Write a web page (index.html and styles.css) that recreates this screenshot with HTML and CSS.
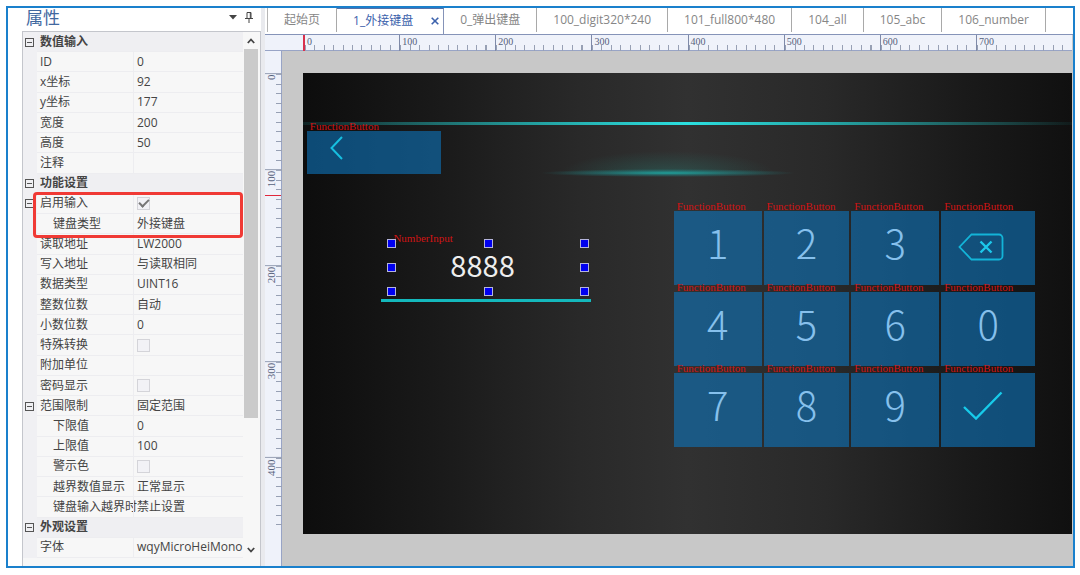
FILE: index.html
```html
<!DOCTYPE html>
<html lang="zh-CN">
<head>
<meta charset="utf-8">
<title>属性</title>
<link rel="stylesheet" href="styles.css">
</head>
<body>
<div class="app">
  <aside class="panel">
    <header class="panel-head">
      <h1 class="panel-title">属性</h1>
      <button class="head-btn" type="button" aria-label="菜单"><svg width="8" height="5" viewBox="0 0 8 5"><path d="M0 0h8L4 4.5z" fill="#444"/></svg></button>
      <button class="head-btn" type="button" aria-label="固定"><svg width="8" height="11" viewBox="0 0 8 11" fill="none" stroke="#444"><path d="M2 6.5v-6h4v6M5.3 .5v6M0 6.5h8M4 6.5V11"/></svg></button>
    </header>
    <div class="panel-body">
      <div class="grid-wrap">
        <table class="props">
          <tbody>
            <tr class="group"><td><button class="fold" type="button" aria-label="折叠"></button></td><th colspan="2">数值输入</th></tr>
            <tr><td></td><th>ID</th><td>0</td></tr>
            <tr><td></td><th>x坐标</th><td>92</td></tr>
            <tr><td></td><th>y坐标</th><td>177</td></tr>
            <tr><td></td><th>宽度</th><td>200</td></tr>
            <tr><td></td><th>高度</th><td>50</td></tr>
            <tr><td></td><th>注释</th><td></td></tr>
            <tr class="group"><td><button class="fold" type="button" aria-label="折叠"></button></td><th colspan="2">功能设置</th></tr>
            <tr><td><button class="fold" type="button" aria-label="折叠"></button></td><th><label for="c1">启用输入</label></th><td><input id="c1" class="tick" type="checkbox" checked></td></tr>
            <tr class="sub"><td></td><th>键盘类型</th><td>外接键盘</td></tr>
            <tr><td></td><th>读取地址</th><td>LW2000</td></tr>
            <tr><td></td><th>写入地址</th><td>与读取相同</td></tr>
            <tr><td></td><th>数据类型</th><td>UINT16</td></tr>
            <tr><td></td><th>整数位数</th><td>自动</td></tr>
            <tr><td></td><th>小数位数</th><td>0</td></tr>
            <tr><td></td><th><label for="c2">特殊转换</label></th><td><input id="c2" class="tick" type="checkbox"></td></tr>
            <tr><td></td><th>附加单位</th><td></td></tr>
            <tr><td></td><th><label for="c3">密码显示</label></th><td><input id="c3" class="tick" type="checkbox"></td></tr>
            <tr><td><button class="fold" type="button" aria-label="折叠"></button></td><th>范围限制</th><td>固定范围</td></tr>
            <tr class="sub"><td></td><th>下限值</th><td>0</td></tr>
            <tr class="sub"><td></td><th>上限值</th><td>100</td></tr>
            <tr class="sub"><td></td><th><label for="c4">警示色</label></th><td><input id="c4" class="tick" type="checkbox"></td></tr>
            <tr class="sub"><td></td><th>越界数值显示</th><td>正常显示</td></tr>
            <tr class="sub"><td></td><th>键盘输入越界时</th><td>禁止设置</td></tr>
            <tr class="group"><td><button class="fold" type="button" aria-label="折叠"></button></td><th colspan="2">外观设置</th></tr>
            <tr><td></td><th>字体</th><td>wqyMicroHeiMono</td></tr>
          </tbody>
        </table>
        <div class="highlight"></div>
      </div>
      <div class="scroll">
        <button class="scroll-btn" type="button" aria-label="向上"><svg width="8" height="6" viewBox="0 0 8 6" fill="none" stroke="#444" stroke-width="1.8"><path d="M.8 5L4 1.5 7.2 5"/></svg></button>
        <div class="track"><div class="thumb"></div></div>
        <button class="scroll-btn" type="button" aria-label="向下"><svg width="8" height="6" viewBox="0 0 8 6" fill="none" stroke="#444" stroke-width="1.8"><path d="M.8 1L4 4.5 7.2 1"/></svg></button>
      </div>
    </div>
  </aside>

  <main class="work">
    <nav class="tabs">
      <button class="tab" type="button">起始页</button>
      <button class="tab active" type="button">1_外接键盘<svg class="close" width="8" height="8" viewBox="0 0 8 8" stroke="#3c62ac" stroke-width="1.6"><path d="M.7 .7l6.6 6.6M7.3 .7L.7 7.3"/></svg></button>
      <button class="tab" type="button">0_弹出键盘</button>
      <button class="tab" type="button">100_digit320*240</button>
      <button class="tab" type="button">101_full800*480</button>
      <button class="tab" type="button">104_all</button>
      <button class="tab" type="button">105_abc</button>
      <button class="tab" type="button">106_number</button>
    </nav>
    <div class="stage">
      <div class="ruler-bg-top"></div>
      <div class="ruler-bg-left"></div>
      <div class="ruler-top"><span>0</span><span>100</span><span>200</span><span>300</span><span>400</span><span>500</span><span>600</span><span>700</span></div>
      <div class="ruler-left"><span>0</span><span>100</span><span>200</span><span>300</span><span>400</span><i class="marker"></i></div>
      <div class="screen">
        <div class="beam"></div>
        <div class="glow"></div>
        <button class="key back" type="button" aria-label="返回"><span class="tag">FunctionButton</span><svg width="13" height="24" viewBox="0 0 13 24" fill="none" stroke="#17bfe0" stroke-width="2"><path d="M12 1L1.5 12 12 23"/></svg></button>
        <div class="field">
          <span class="tag">NumberInput</span>
          <input class="number" type="text" value="8888" aria-label="NumberInput">
          <i class="handle nw"></i><i class="handle n"></i><i class="handle ne"></i>
          <i class="handle w"></i><i class="handle e"></i>
          <i class="handle sw"></i><i class="handle s"></i><i class="handle se"></i>
        </div>
        <div class="underline"></div>
        <div class="keypad">
          <button class="key" type="button"><span class="tag">FunctionButton</span>1</button>
          <button class="key" type="button"><span class="tag">FunctionButton</span>2</button>
          <button class="key" type="button"><span class="tag">FunctionButton</span>3</button>
          <button class="key del" type="button" aria-label="删除"><span class="tag">FunctionButton</span><svg width="46" height="28" viewBox="0 0 46 28" fill="none" stroke="#13b4d8" stroke-width="1.8"><path d="M13.5 1.5H41a3.5 3.5 0 0 1 3.5 3.5V23a3.5 3.5 0 0 1-3.5 3.5H13.5L1.5 14z"/><path d="M22.5 8.500l11 11M33.5 8.500l-11 11" stroke="#1cc8ea" stroke-width="2.4"/></svg></button>
          <button class="key" type="button"><span class="tag">FunctionButton</span>4</button>
          <button class="key" type="button"><span class="tag">FunctionButton</span>5</button>
          <button class="key" type="button"><span class="tag">FunctionButton</span>6</button>
          <button class="key" type="button"><span class="tag">FunctionButton</span>0</button>
          <button class="key" type="button"><span class="tag">FunctionButton</span>7</button>
          <button class="key" type="button"><span class="tag">FunctionButton</span>8</button>
          <button class="key" type="button"><span class="tag">FunctionButton</span>9</button>
          <button class="key ok" type="button" aria-label="确认"><span class="tag">FunctionButton</span><svg width="40" height="29" viewBox="0 0 40 29" fill="none" stroke="#17cbea" stroke-width="2.4"><path d="M1 16l12 11.5L38.5 1.5"/></svg></button>
        </div>
      </div>
    </div>
  </main>
</div>
</body>
</html>
```
FILE: styles.css
```css
* { box-sizing: border-box; }

body {
  margin: 0;
  padding: 6px 5px 7px 6px;
  min-height: 100vh;
  display: grid;
  background: #fff;
  color: #444;
  font: 12px/16px "Open Sans", "Noto Sans CJK SC", sans-serif;
}

button {
  margin: 0;
  padding: 0;
  border: 0;
  background: none;
  font: inherit;
  color: inherit;
}

.app {
  display: grid;
  grid-template-columns: 257px 1fr;
  border: 2px solid #1a80cc;
  overflow: hidden;
}

/* property panel */
.panel {
  display: flex;
  flex-direction: column;
  padding-left: 14px;
  border-right: 4px solid #e9eaee;
}

.panel-head {
  display: flex;
  align-items: center;
  gap: 8px;
  height: 23px;
  padding: 0 8px 4px 4px;
}

.panel-title {
  margin: 0 auto 0 0;
  font-size: 17px;
  line-height: 19px;
  font-weight: 400;
  color: #41689f;
}

.head-btn { display: flex; }

.panel-body {
  flex: 1;
  display: flex;
  border: 1px solid #c4c6cc;
  border-bottom: 0;
  background: #f7f7f7;
}

.grid-wrap {
  position: relative;
  flex: 1;
  display: grid;
  min-width: 0;
  padding-bottom: 8px;
}

.props, .props tbody { display: grid; }
.props tbody { grid-auto-rows: 1fr; }

.props tr {
  display: grid;
  grid-template-columns: 14px 96px 1fr;
  min-width: 0;
  white-space: nowrap;
}

.props td, .props th {
  display: flex;
  align-items: center;
  min-width: 0;
  padding: 0 0 0 3px;
  border-bottom: 1px solid #ededf0;
  font-weight: 400;
  text-align: left;
}

.props td:first-child {
  padding: 0 0 0 2px;
  background: #f0f0f3;
  border-bottom: 0;
}

.props td:last-child { padding-left: 3px; border-left: 1px solid #ededf0; }
.props .sub th { padding-left: 16px; }
.props .group { background: #efeff2; }
.props .group th { grid-column: span 2; font-weight: 700; }

.fold {
  width: 9px;
  height: 9px;
  border: 1px solid #555;
  background: linear-gradient(#555, #555) center / 5px 1px no-repeat;
}

.tick {
  appearance: none;
  display: grid;
  place-items: center;
  width: 13px;
  height: 13px;
  margin: 0;
  border: 1px solid #d4d4d9;
  background: #f2f2f6;
}

.tick:checked::after {
  content: "";
  width: 8px;
  height: 4px;
  margin-bottom: 3px;
  border: solid #777;
  border-width: 0 0 2px 2px;
  transform: rotate(-45deg);
}

.highlight {
  position: absolute;
  top: 30%;
  left: 10px;
  right: 0;
  height: 46px;
  border: 3px solid #f03a35;
  border-radius: 4px;
}

.scroll {
  display: flex;
  flex-direction: column;
  width: 17px;
  padding: 0 2px 8px 1px;
}

.scroll-btn { display: grid; place-items: center; height: 17px; }
.track { flex: 1; }
.thumb { height: 75%; background: #cacaca; }

/* tabs */
.work { display: flex; flex-direction: column; min-width: 0; }

.tabs {
  display: flex;
  height: 27px;
  padding-left: 2px;
  border-bottom: 1px solid #8593b8;
}

.tab {
  display: flex;
  align-items: center;
  height: 24px;
  padding: 0 16px;
  border-right: 1px solid #a9a9a9;
  color: #868686;
  white-space: nowrap;
}

.tab:first-child { border-left: 1px solid #b5b5b5; }

.tab.active {
  height: 26px;
  gap: 18px;
  padding: 0 4px 2px 16px;
  border-top: 1px solid #5570a8;
  border-right-color: #8593b8;
  color: #3c62ac;
}

/* rulers and canvas */
.stage {
  flex: 1;
  display: grid;
  grid-template-columns: 17px 21px 1fr;
  grid-template-rows: 16px 22px auto 1fr;
  padding-right: 1px;
  background: #c8c8c8;
}

.ruler-bg-top {
  grid-area: 1 / 1 / 2 / 4;
  background: #eff2fa;
  border-bottom: 1px solid #98a4c6;
}

.ruler-bg-left {
  grid-area: 2 / 1 / 5 / 2;
  background: #eff2fa;
  border-right: 1px solid #98a4c6;
}

.ruler-top, .ruler-left {
  display: grid;
  color: #56617c;
}

.ruler-top {
  grid-area: 1 / 3;
  grid-template-columns: repeat(8, 1fr);
  font: 10px/10px "Liberation Serif", serif;
}

.ruler-top span {
  padding: 2px 0 0 2px;
  border-left: 1px solid #7f8aa8;
  background: repeating-linear-gradient(to right, #97a0b4 0 1px, transparent 1px 10%) bottom / 100% 6px no-repeat;
}

.ruler-top span:first-child { border-left: 2px solid #d9304c; }

.ruler-left {
  position: relative;
  grid-area: 3 / 1;
  grid-template-rows: 5fr 5fr 5fr 5fr 4fr;
  font: 11px/11px "Liberation Serif", serif;
}

.ruler-left span {
  writing-mode: vertical-rl;
  transform: rotate(180deg);
  display: flex;
  align-items: center;
  justify-content: flex-end;
  padding: 0 0 1px 4px;
  border-bottom: 1px solid #97a0b4;
  background: repeating-linear-gradient(to top, #97a0b4 0 1px, transparent 1px 10%) left / 6px 100% no-repeat;
}

.ruler-left span:nth-child(5) {
  background-image: repeating-linear-gradient(to top, #97a0b4 0 1px, transparent 1px 12.5%);
}

.marker {
  position: absolute;
  top: 26.5%;
  left: 0;
  width: 16px;
  height: 1px;
  background: #e0283c;
}

.screen {
  position: relative;
  grid-area: 3 / 3;
  aspect-ratio: 5 / 3;
  background: linear-gradient(to right, #0d0d0d, #1a1a1a 18%, #292929 36%, #313131 50%, #292929 68%, #1a1a1a 86%, #101010);
}

.beam {
  position: absolute;
  top: 49px;
  left: 0;
  right: 0;
  height: 3px;
  background: linear-gradient(to right, rgba(34, 220, 220, .1), rgba(34, 200, 200, .75) 30%, #2be0e0 50%, rgba(34, 200, 200, .75) 70%, rgba(34, 220, 220, .05));
}

.glow {
  position: absolute;
  top: 16%;
  left: 31%;
  width: 33%;
  height: 32px;
  background:
    radial-gradient(ellipse 50% 4px at 50% 26px, rgba(30, 165, 160, .9), rgba(30, 150, 150, .45) 50%, transparent),
    radial-gradient(ellipse 42% 22px at 50% 26px, rgba(40, 120, 110, .4), transparent) top / 100% 27px no-repeat;
}

.tag {
  position: absolute;
  top: -10px;
  left: 3px;
  font: 11px/11px "Liberation Serif", serif;
  color: #d01414;
}

.key {
  position: relative;
  display: grid;
  place-items: center;
  padding-bottom: 12px;
  background: rgba(14, 116, 188, .6);
  color: #86c0ec;
  font: 300 40px/44px "Noto Sans CJK SC", sans-serif;
}

.back {
  position: absolute;
  top: 12.5%;
  left: 0.5%;
  width: 17.4%;
  height: 9.3%;
  justify-items: start;
  padding: 0 0 8px 23px;
}

.keypad {
  position: absolute;
  top: 30%;
  left: 48.2%;
  width: 47%;
  height: 51%;
  display: grid;
  grid-template-columns: 88fr 86fr 88fr 94fr;
  grid-template-rows: repeat(3, 1fr);
  gap: 7px 2px;
}

.del { padding-right: 14px; padding-bottom: 2px; }
.ok { padding-right: 10px; padding-bottom: 8px; }

.field {
  position: absolute;
  top: 36.9%;
  left: 11.5%;
  width: 25%;
  height: 10.4%;
}

.field .tag { left: 2px; }

.number {
  display: block;
  width: 100%;
  height: 100%;
  padding: 0 10px 7px 0;
  border: 0;
  background: none;
  color: #eee;
  font: 29px/40px "Noto Sans CJK SC", sans-serif;
  text-align: center;
}

.handle {
  position: absolute;
  width: 9px;
  height: 9px;
  margin: -4px 0 0 -4px;
  border: 1px solid #b4b4dc;
  background: #0000f0;
}

.nw, .n, .ne { top: 0; }
.w, .e { top: 50%; }
.sw, .s, .se { top: 100%; }
.nw, .w, .sw { left: 0; }
.n, .s { left: 50%; }
.ne, .e, .se { left: 100%; }

.underline {
  position: absolute;
  top: 49%;
  left: 10.1%;
  width: 27.4%;
  height: 3px;
  background: #14b8bc;
}
```
